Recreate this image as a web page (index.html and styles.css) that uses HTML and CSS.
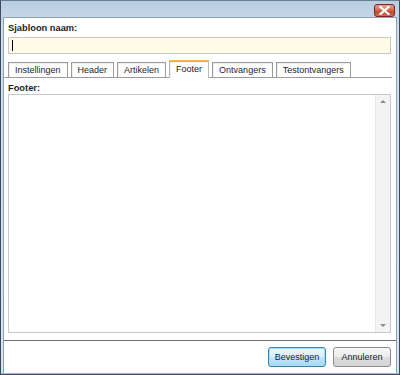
FILE: index.html
```html
<!DOCTYPE html>
<html>
<head>
<meta charset="utf-8">
<link rel="stylesheet" href="styles.css">
</head>
<body>
<div class="window">
  <div class="titlebar">
    <div class="close"><svg width="11" height="9" viewBox="0 0 11 9"><path d="M1.5 1 L9.5 8 M9.5 1 L1.5 8" stroke="#fff" stroke-width="2.2" stroke-linecap="square"/></svg></div>
  </div>
  <div class="client">
    <div class="body">
      <div class="label">Sjabloon naam:</div>
      <div class="input"><span class="caret"></span></div>
      <div class="tabs">
        <div class="tab">Instellingen</div>
        <div class="tab">Header</div>
        <div class="tab">Artikelen</div>
        <div class="tab active">Footer</div>
        <div class="tab">Ontvangers</div>
        <div class="tab">Testontvangers</div>
      </div>
      <div class="label label2">Footer:</div>
      <div class="textarea">
        <div class="scroll">
          <span class="arrow up"></span>
          <span class="arrow down"></span>
        </div>
      </div>
    </div>
    <div class="footer">
      <button class="btn primary">Bevestigen</button>
      <button class="btn">Annuleren</button>
    </div>
  </div>
</div>
</body>
</html>
```
FILE: styles.css
```css
html, body { margin: 0; padding: 0; }
body { width: 400px; height: 375px; overflow: hidden; font-family: "Liberation Sans", Arial, sans-serif; font-size: 9px; color: #1e1e1e; }
.window {
  width: 400px; height: 375px; box-sizing: border-box;
  border: 1px solid #3b4b5c; border-top-color: #6b7e92;
  background: linear-gradient(#b9cde2, #cfdeed 30px, #d6e3ef);
  display: flex; flex-direction: column;
  padding: 0 2px 1px 2px;
  box-shadow: inset 0 -1px 0 #7fd2e0;
}
.titlebar { height: 16px; flex: none; display: flex; justify-content: flex-end; align-items: flex-start; padding-top: 3px; box-sizing: border-box; }
.close {
  width: 21px; height: 13px; margin-right: 2px; box-sizing: border-box;
  border: 1px solid #7a2a20; border-radius: 3px;
  background: linear-gradient(#e8a08f, #d2634c 50%, #c2412a 51%, #d36a50);
  display: flex; align-items: center; justify-content: center;
}
.client { flex: 1; background: #fff; display: flex; flex-direction: column; border: 1px solid #8ea0b4; border-bottom: none; }
.body { flex: 1; display: flex; flex-direction: column; padding: 0 5px 0 4px; }
.label { font-weight: bold; font-size: 9.3px; margin-top: 4px; height: 13px; line-height: 13px; }
.label2 { margin-top: 4px; height: 12px; line-height: 12px; }
.input {
  height: 17px; box-sizing: border-box; border: 1px solid #c8c8c8; background: #fffbe6; margin-top: 2px;
  display: flex; align-items: center; padding-left: 3px;
}
.caret { width: 1px; height: 11px; background: #000; }
.tabs { display: flex; gap: 3px; margin-top: 7px; border-bottom: 1px solid #9c9c9c; height: 16px; align-items: flex-end; margin-left: -4px; padding-left: 4px; margin-right: -1px; }
.tab {
  height: 15px; box-sizing: border-box; border: 1px solid #9c9c9c; border-bottom: none;
  padding: 0 6px; line-height: 14px; background: #fff; font-size: 9px; box-shadow: inset 1px 1px 0 #eee;
}
.tab.active { height: 18px; border-color: #b8b8b8; border-top: 2px solid #f6b445; padding: 0 6px; line-height: 15px; margin-bottom: -1px; }
.textarea {
  flex: 1; border: 1px solid #c8c8c8; box-sizing: border-box; display: flex; justify-content: flex-end;
  margin-bottom: 7px;
}
.scroll { width: 14px; background: #f3f3f3; position: relative; border-left: 1px solid #e8e8e8; }
.arrow { position: absolute; left: 4px; width: 0; height: 0; border-left: 3px solid transparent; border-right: 3px solid transparent; }
.arrow.up { top: 5px; border-bottom: 3px solid #8a8a8a; }
.arrow.down { bottom: 5px; border-top: 3px solid #8a8a8a; }
.footer { height: 33px; flex: none; box-sizing: border-box; border-top: 1px solid #6e6e6e; display: flex; justify-content: flex-end; align-items: center; gap: 7px; padding-right: 5px; padding-bottom: 1px; background: #fff; }
.btn {
  width: 58px; height: 20px; box-sizing: border-box; font-family: inherit; font-size: 9px; color: #1e1e1e;
  border: 1px solid #8a8a8a; border-radius: 3px; background: linear-gradient(#f6f6f6, #ececec 50%, #dcdcdc 51%, #d4d4d4); padding: 0;
}
.btn.primary { border-color: #3c7fb1; box-shadow: inset 0 0 0 1px #a6e0f5; background: linear-gradient(#eaf6fd, #d9f0fc 50%, #bee6fd 51%, #a7d9f5); }
```
